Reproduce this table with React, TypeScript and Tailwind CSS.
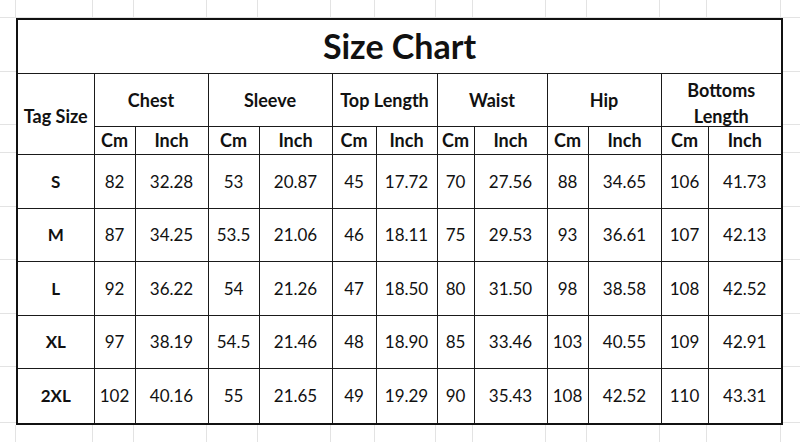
import React from 'react';

const colWidths = [77, 41, 73, 51, 73, 44, 61, 37, 73, 41, 73, 47, 74];
const rowHeights = [54, 53, 28, 54, 53, 54, 53, 56];

const groups = ['Chest', 'Sleeve', 'Top Length', 'Waist', 'Hip'];

const rows: { tag: string; values: string[] }[] = [
  { tag: 'S', values: ['82', '32.28', '53', '20.87', '45', '17.72', '70', '27.56', '88', '34.65', '106', '41.73'] },
  { tag: 'M', values: ['87', '34.25', '53.5', '21.06', '46', '18.11', '75', '29.53', '93', '36.61', '107', '42.13'] },
  { tag: 'L', values: ['92', '36.22', '54', '21.26', '47', '18.50', '80', '31.50', '98', '38.58', '108', '42.52'] },
  { tag: 'XL', values: ['97', '38.19', '54.5', '21.46', '48', '18.90', '85', '33.46', '103', '40.55', '109', '42.91'] },
  { tag: '2XL', values: ['102', '40.16', '55', '21.65', '49', '19.29', '90', '35.43', '108', '42.52', '110', '43.31'] },
];

// faint spreadsheet gridlines above / below the chart
const GridStrip: React.FC<{ className: string }> = ({ className }) => (
  <div className={`flex ${className}`}>
    <div className="w-[16px] shrink-0 border-r border-[#e3e3e3]" />
    {colWidths.map((w, i) => (
      <div key={i} className="shrink-0 border-r border-[#e3e3e3]" style={{ width: w }} />
    ))}
    <div className="flex-1" />
  </div>
);

const SideStrip: React.FC<{ className: string }> = ({ className }) => (
  <div className={`flex flex-col ${className}`}>
    {rowHeights.map((h, i) => (
      <div key={i} className="shrink-0 border-b border-[#e3e3e3]" style={{ height: h }} />
    ))}
  </div>
);

const cell = 'border border-[#1a1a1a] text-center align-middle p-0 leading-none';

export default function App() {
  return (
    <div className="w-[800px] h-[442px] bg-white flex flex-col overflow-hidden font-['Lato',sans-serif] text-[#111]">
      <GridStrip className="h-[18px] shrink-0 border-b border-[#e3e3e3]" />
      <div className="flex shrink-0">
        <SideStrip className="w-[16px] shrink-0" />
        <table className="table-fixed border-collapse border-2 border-[#111] w-[765px] shrink-0">
          <colgroup>
            {colWidths.map((w, i) => (
              <col key={i} style={{ width: w }} />
            ))}
          </colgroup>
          <tbody>
            <tr className="h-[54px]">
              <td colSpan={13} className={`${cell} text-[34px] font-bold`}>
                Size Chart
              </td>
            </tr>
            <tr className="h-[53px]">
              <td rowSpan={2} className={`${cell} text-[18px] font-bold pt-[4px]`}>
                Tag Size
              </td>
              {groups.map((g) => (
                <td key={g} colSpan={2} className={`${cell} text-[18px] font-bold whitespace-nowrap`}>
                  {g}
                </td>
              ))}
              <td colSpan={2} className={`${cell} text-[18px] font-bold`}>
                <div className="leading-[26px] relative top-[3px]">
                  Bottoms
                  <br />
                  Length
                </div>
              </td>
            </tr>
            <tr className="h-[28px]">
              {Array.from({ length: 6 }).flatMap((_, i) => [
                <td key={`c${i}`} className={`${cell} text-[18px] font-bold`}>Cm</td>,
                <td key={`i${i}`} className={`${cell} text-[18px] font-bold`}>Inch</td>,
              ])}
            </tr>
            {rows.map((r, ri) => (
              <tr key={r.tag} style={{ height: rowHeights[3 + ri] }}>
                <td className={`${cell} text-[17px] font-bold`}>{r.tag}</td>
                {r.values.map((v, vi) => (
                  <td key={vi} className={`${cell} text-[17px]`}>
                    {v}
                  </td>
                ))}
              </tr>
            ))}
          </tbody>
        </table>
        <SideStrip className="flex-1" />
      </div>
      <GridStrip className="flex-1" />
    </div>
  );
}
